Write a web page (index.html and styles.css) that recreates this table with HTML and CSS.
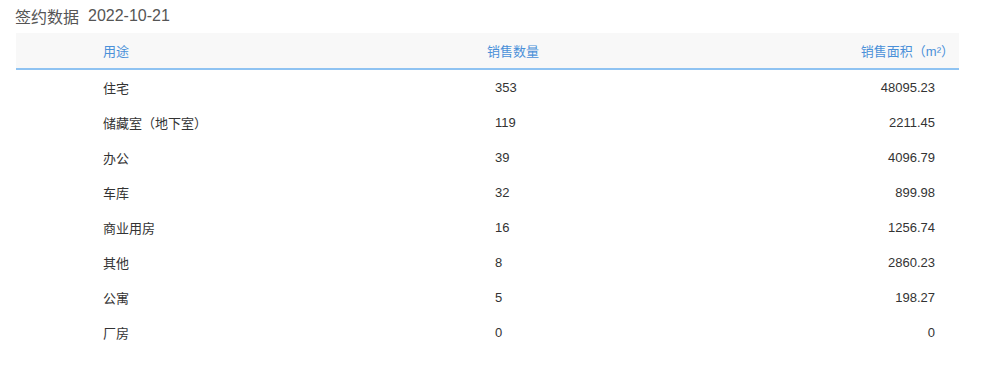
FILE: index.html
```html
<!DOCTYPE html>
<html lang="zh">
<head>
<meta charset="utf-8">
<link rel="stylesheet" href="styles.css">
</head>
<body>
<div class="panel">
  <div class="title"><span>签约数据</span><span class="date">2022-10-21</span></div>
  <div class="table">
    <div class="row head">
      <div class="c1">用途</div>
      <div class="c2">销售数量</div>
      <div class="c3">销售面积（m²）</div>
    </div>
    <div class="row"><div class="c1">住宅</div><div class="c2">353</div><div class="c3">48095.23</div></div>
    <div class="row"><div class="c1">储藏室（地下室）</div><div class="c2">119</div><div class="c3">2211.45</div></div>
    <div class="row"><div class="c1">办公</div><div class="c2">39</div><div class="c3">4096.79</div></div>
    <div class="row"><div class="c1">车库</div><div class="c2">32</div><div class="c3">899.98</div></div>
    <div class="row"><div class="c1">商业用房</div><div class="c2">16</div><div class="c3">1256.74</div></div>
    <div class="row"><div class="c1">其他</div><div class="c2">8</div><div class="c3">2860.23</div></div>
    <div class="row"><div class="c1">公寓</div><div class="c2">5</div><div class="c3">198.27</div></div>
    <div class="row"><div class="c1">厂房</div><div class="c2">0</div><div class="c3">0</div></div>
  </div>
</div>
</body>
</html>
```
FILE: styles.css
```css
html, body {
  margin: 0;
  padding: 0;
  background: #fff;
}
body {
  font-family: "Liberation Sans", "Noto Sans CJK SC", sans-serif;
  color: #333;
}
.panel {
  width: 943px;
  padding-left: 16px;
}
.title {
  height: 33px;
  display: flex;
  align-items: center;
  font-size: 16px;
  color: #555;
  margin-left: -1px;
  padding-bottom: 1px;
  box-sizing: border-box;
}
.title .date {
  margin-left: 9px;
}
.table {
  display: flex;
  flex-direction: column;
}
.row {
  display: grid;
  grid-template-columns: 471px 1fr 1fr;
  height: 35px;
  align-items: center;
  font-size: 13px;
  color: #333;
}
.row.head {
  background: #f8f8f8;
  border-bottom: 2px solid #8fc3f2;
  color: #4a90d9;
}
.c1 {
  padding-left: 87px;
}
.c2 {
  padding-left: 8px;
}
.c3 {
  text-align: right;
  padding-right: 24px;
}
.head .c2 {
  padding-left: 0;
}
.head .c3 {
  padding-right: 5px;
}
```
